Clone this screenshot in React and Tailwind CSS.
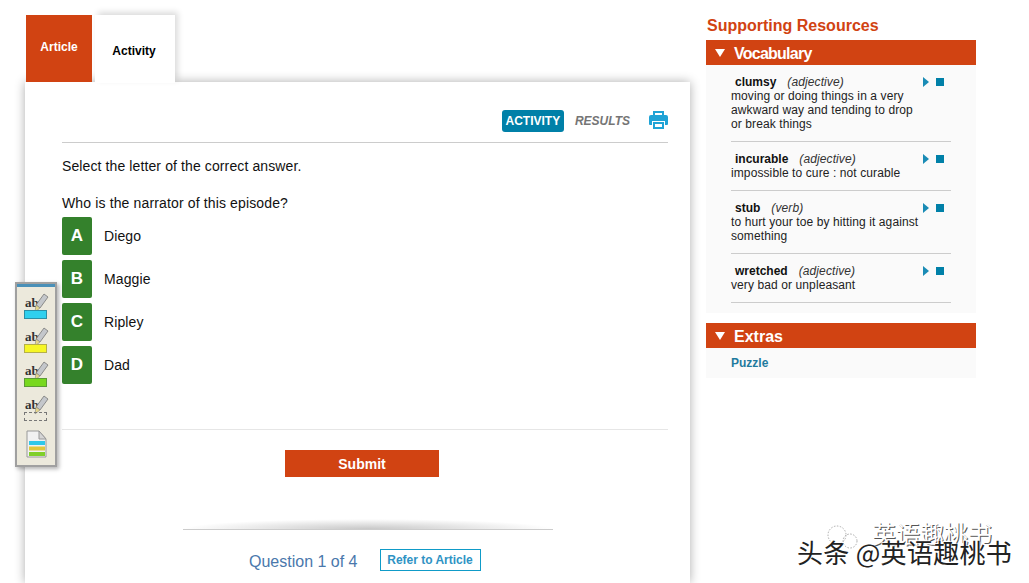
import React from 'react';

const options = [
  { letter: 'A', text: 'Diego' },
  { letter: 'B', text: 'Maggie' },
  { letter: 'C', text: 'Ripley' },
  { letter: 'D', text: 'Dad' },
];

const words = [
  { term: 'clumsy', kind: 'adjective', def: ['moving or doing things in a very', 'awkward way and tending to drop', 'or break things'] },
  { term: 'incurable', kind: 'adjective', def: ['impossible to cure : not curable'] },
  { term: 'stub', kind: 'verb', def: ['to hurt your toe by hitting it against', 'something'] },
  { term: 'wretched', kind: 'adjective', def: ['very bad or unpleasant'] },
];

const tools = [
  { fill: 'bg-[#2fd0ee]', border: 'border-[#2b8fa5] border-solid' },
  { fill: 'bg-[#f6f626]', border: 'border-[#b5b04a] border-solid' },
  { fill: 'bg-[#78d81e]', border: 'border-[#5c9a36] border-solid' },
  { fill: 'bg-transparent', border: 'border-[#777] border-dashed' },
];

const PrinterIcon = () => (
  <svg width="19" height="18" viewBox="0 0 19 18">
    <path d="M4 0h11v5H13V2H6v3H4z" fill="#1fa3d6" />
    <path d="M2 4h15a2 2 0 0 1 2 2v7a1 1 0 0 1-1 1h-2v-4H3v4H1a1 1 0 0 1-1-1V6a2 2 0 0 1 2-2z" fill="#1fa3d6" />
    <path d="M4 11h11v7H4zM6 13v3h7v-3z" fill="#1fa3d6" />
  </svg>
);

const Pencil = () => (
  <svg width="15" height="20" viewBox="0 0 15 20" className="absolute left-[10px] top-[-1px]">
    <path d="M10 1l4 3-8 11-4-3z" fill="#c4c7cb" stroke="#777" strokeWidth="0.8" />
    <path d="M2 12l4 3-5 4z" fill="#e6d68a" stroke="#888" strokeWidth="0.6" />
  </svg>
);

const HighlightTool = ({ fill, border }) => (
  <div className="relative w-[24px] h-[25px]">
    <span className="absolute left-[1px] top-[2px] font-['Liberation_Serif',serif] font-bold text-[13px] leading-[13px] text-[#333]">ab</span>
    <Pencil />
    <div className={`absolute left-0 bottom-0 w-[23px] h-[9px] border ${border} ${fill}`} />
  </div>
);

const NotesIcon = () => (
  <svg width="21" height="28" viewBox="0 0 21 28">
    <path d="M1 1h12l7 8v18H1z" fill="#f1f1f1" stroke="#999" />
    <path d="M13 1v8h7z" fill="#d5d5d5" stroke="#999" />
    <rect x="3" y="11" width="16" height="4" fill="#2fc8ea" />
    <rect x="3" y="16.5" width="16" height="4" fill="#e0c83c" />
    <rect x="3" y="22" width="16" height="4" fill="#80cf2a" />
  </svg>
);

const Toolbar = () => (
  <div className="absolute left-[15px] top-[282px] w-[42px] h-[185px] bg-[#ece9dc] border-2 border-[#a0a0a0] shadow-[2px_2px_4px_rgba(0,0,0,0.3)]">
    <div className="h-[3px] bg-[#4a90b8]" />
    <div className="flex flex-col items-center gap-[9px] pt-[7px]">
      {tools.map((t, i) => (
        <HighlightTool key={i} fill={t.fill} border={t.border} />
      ))}
      <NotesIcon />
    </div>
  </div>
);

const SectionBar = ({ title, tracking }) => (
  <div className="h-[25px] bg-[#d14312] flex items-center pl-[9px] gap-[9px] text-white font-bold text-[16px]">
    <span className="w-0 h-0 border-l-[5px] border-r-[5px] border-t-[8px] border-l-transparent border-r-transparent border-t-white" />
    <span className={`pt-[2px] ${tracking}`}>{title}</span>
  </div>
);

const Watermark = () => (
  <div className="absolute left-[797px] top-[525px] w-[220px] h-[41px] font-['Noto_Sans_CJK_SC',sans-serif]">
    <svg width="36" height="24" viewBox="0 0 36 24" className="absolute left-[28px] top-0" fill="none" stroke="#aaa" strokeDasharray="1.5 1.5">
      <circle cx="12" cy="10" r="9" />
      <circle cx="25" cy="16" r="7" />
    </svg>
    <div className="absolute left-[75px] top-[-4px] text-[24px] leading-[24px] whitespace-nowrap text-white [text-shadow:1px_1px_0_#555]">英语趣桃书</div>
    <div className="absolute left-0 top-[13px] text-[26px] leading-[28px] tracking-[0.3px] whitespace-nowrap text-[#222] [text-shadow:1px_1px_1px_#fff,-1px_-1px_1px_#fff]">头条 @英语趣桃书</div>
  </div>
);

export default function App() {
  return (
    <div className="relative w-[1029px] h-[583px] overflow-hidden bg-white flex font-['Liberation_Sans',Arial,sans-serif] text-[14px] text-[#111]">
      <div className="w-[706px] pl-[25px] shrink-0">
        <div className="flex h-[82px] pt-[15px] pl-[1px]">
          <div className="w-[66px] bg-[#d14312] text-white font-bold text-[12px] flex justify-center pt-[23px]">Article</div>
          <div className="relative z-10 ml-[3px] w-[80px] h-[68px] bg-white font-bold text-[12px] text-black flex justify-center pt-[27px] pr-[2px] shadow-[3px_-3px_6px_rgba(0,0,0,0.14)]">Activity</div>
        </div>
        <div className="w-[665px] h-[501px] bg-white shadow-[0_0_10px_rgba(0,0,0,0.32)] pl-[37px] pr-[22px] pt-[28px]">
          <div className="h-[33px] border-b border-[#cccccc] flex items-start justify-end">
            <span className="h-[22px] w-[62px] rounded-[3px] bg-[#0080a8] text-white font-bold text-[12px] flex items-center justify-center">ACTIVITY</span>
            <span className="ml-[11px] mt-[2px] font-bold italic text-[12px] text-[#757575]">RESULTS</span>
            <span className="ml-[19px] mt-[1px]"><PrinterIcon /></span>
          </div>
          <p className="mt-[15px] leading-[16px] tracking-[0.11px]">Select the letter of the correct answer.</p>
          <p className="mt-[21px] leading-[16px] tracking-[0.14px]">Who is the narrator of this episode?</p>
          <div className="mt-[6px] flex flex-col gap-[5px]">
            {options.map((o) => (
              <div key={o.letter} className="flex items-center">
                <div className="w-[30px] h-[38px] rounded-[2px] bg-[#34812c] text-white font-bold text-[17px] flex items-center justify-center">{o.letter}</div>
                <span className="ml-[12px] tracking-[0.1px]">{o.text}</span>
              </div>
            ))}
          </div>
          <div className="mt-[45px] h-px bg-[#e6e6e6]" />
          <div className="mt-[20px] pr-[6px] flex justify-center">
            <button className="w-[154px] h-[27px] pt-[1px] bg-[#d14312] text-white font-bold text-[14px]">Submit</button>
          </div>
          <div className="relative mt-[42px] ml-[121px] mr-[115px] h-[11px] border-b border-[#cccccc] overflow-hidden">
            <div className="h-[10px] bg-[radial-gradient(ellipse_50%_100%_at_50%_100%,#c8c8c8,transparent)]" />
          </div>
          <div className="mt-[19px] pl-[187px] flex items-start">
            <span className="mt-[4px] text-[16px] leading-[18px] text-[#4a78ac]">Question 1 of 4</span>
            <span className="ml-[22px] w-[101px] h-[22px] border border-[#0f9bc8] text-[#2f93c4] font-bold text-[12px] flex items-center justify-center">Refer to Article</span>
          </div>
        </div>
      </div>

      <div className="w-[270px] shrink-0">
        <h2 className="mt-[16px] ml-[1px] h-[24px] text-[16px] leading-[19px] font-bold text-[#d14312]">Supporting Resources</h2>
        <SectionBar title="Vocabulary" tracking="tracking-[-0.75px]" />
        <div className="h-[248px] bg-[#fafafa] pl-[25px] pr-[25px] pt-[10px] text-[12px] leading-[14px]">
          {words.map((w) => (
            <div key={w.term} className="relative mb-[10px] border-b border-[#cccccc] pb-[10px]">
              <div className="pl-[4px]">
                <span className="font-bold">{w.term}</span>
                <span className="ml-[11px] italic text-[#333] tracking-[0.1px]">({w.kind})</span>
              </div>
              {w.def.map((line) => (
                <div key={line} className="text-[#222] tracking-[0.1px]">{line}</div>
              ))}
              <div className="absolute right-[7px] top-[2px] flex items-center gap-[7px]">
                <span className="w-0 h-0 border-y-[5px] border-l-[6px] border-y-transparent border-l-[#1a8bb5]" />
                <span className="w-[8px] h-[8px] bg-[#0080a8]" />
              </div>
            </div>
          ))}
        </div>
        <div className="mt-[10px]">
          <SectionBar title="Extras" tracking="" />
        </div>
        <div className="h-[30px] bg-[#fafafa] pl-[25px] pt-[8px] text-[12px] leading-[14px] font-bold text-[#1f7a9e]">Puzzle</div>
      </div>

      <Toolbar />
      <Watermark />
    </div>
  );
}
